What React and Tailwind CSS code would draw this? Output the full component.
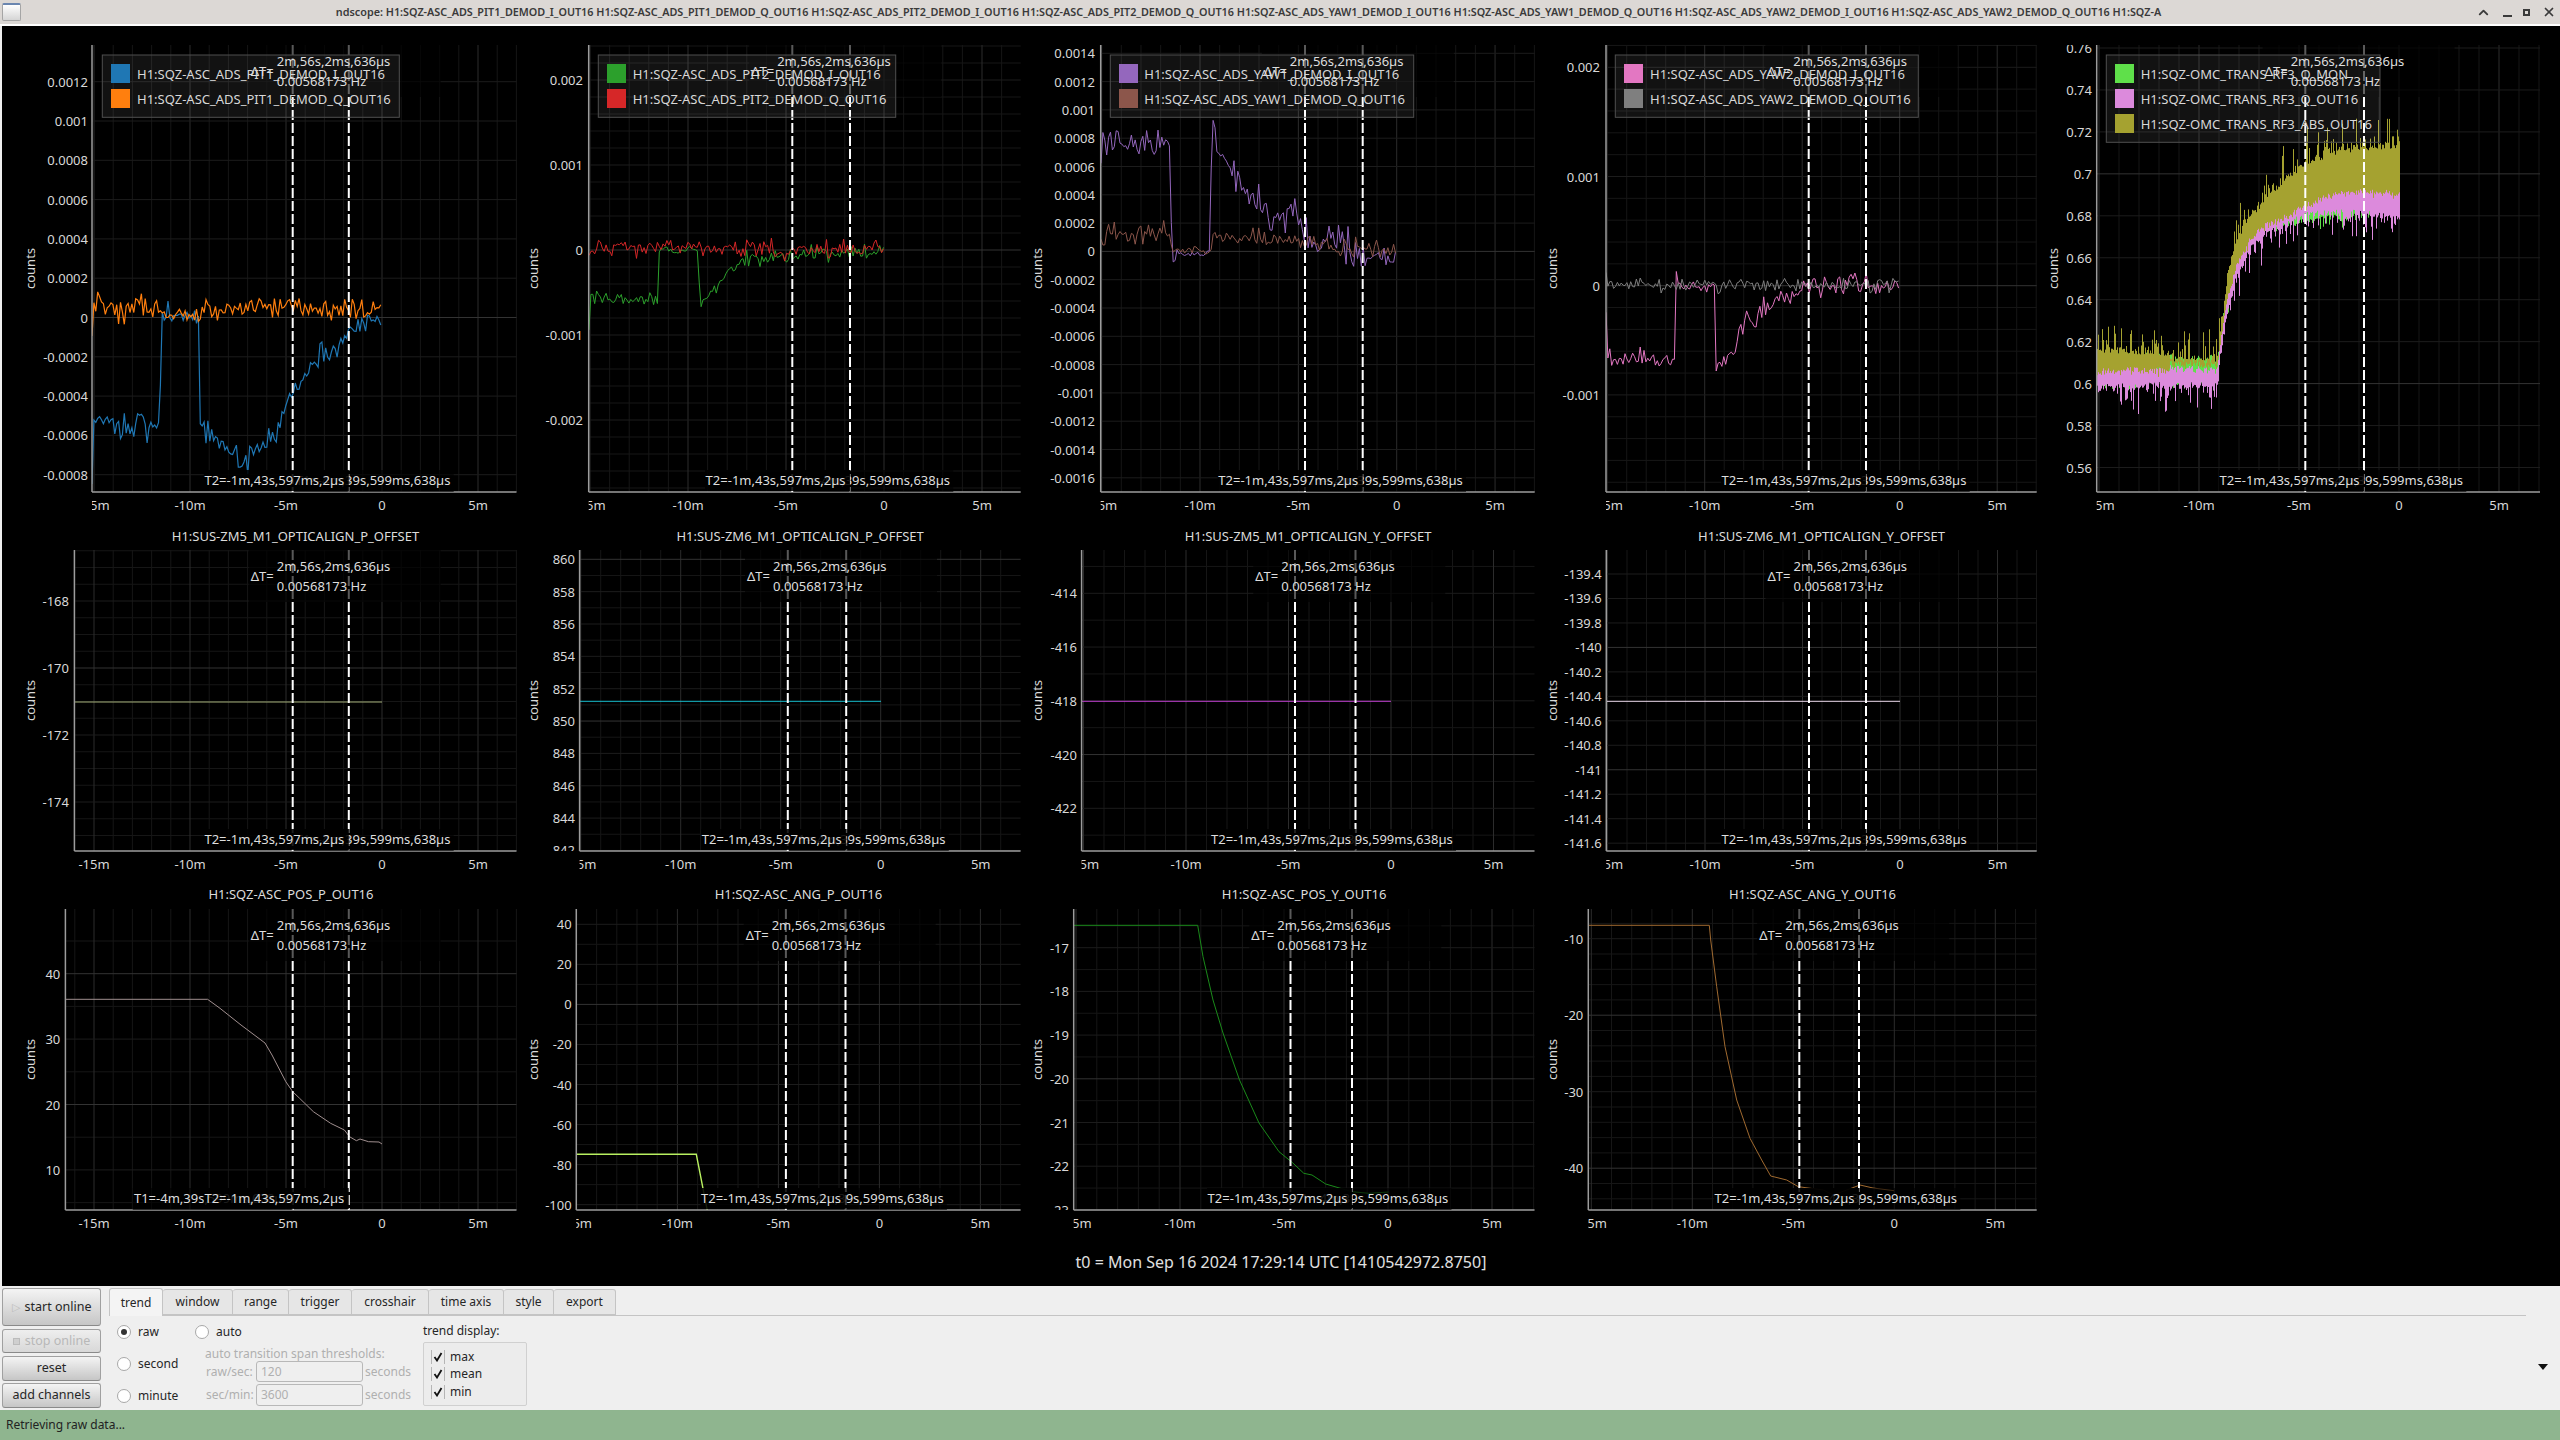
import { ChevronUp, X } from "lucide-react";

const FONT = "font-['Noto_Sans',sans-serif]";

const COLS = [
  [2, 518],
  [520, 510],
  [1030, 510],
  [1540, 505],
  [2045, 513],
];
const ROWS = [
  { y: 26, h: 494, top: 45, bottom: 492, titleY: null },
  { y: 520, h: 360, top: 550, bottom: 851, titleY: 541 },
  { y: 880, h: 360, top: 909, bottom: 1210, titleY: 899 },
];

function rng(seed) {
  let s = seed;
  return () => (s = (s * 16807) % 2147483647) / 2147483647;
}

function lerpAt(knots, x, i) {
  let k = 0;
  while (k < knots.length - 2 && x > knots[k + 1][0]) k++;
  const a = knots[k];
  const b = knots[k + 1];
  const t = Math.min(1, Math.max(0, (x - a[0]) / (b[0] - a[0] || 1)));
  return a[i] + (b[i] - a[i]) * t;
}

function noisy(seed, knots, step = 1.9) {
  const r = rng(seed);
  const start = knots[0][0];
  const end = knots[knots.length - 1][0];
  const pts = [];
  for (let x = start; x <= end; x += step) {
    const amp = lerpAt(knots, x, 2);
    const n = ((r() + r() + r() - 1.5) / 1.5) * 2 * amp;
    pts.push(`${x.toFixed(1)},${(lerpAt(knots, x, 1) + n).toFixed(1)}`);
  }
  return pts.join(" ");
}

function band(seed, topK, botK, topSpike, botSpike) {
  const r = rng(seed);
  let d = "";
  for (let x = 2097; x <= 2399; x += 1) {
    const t = lerpAt(topK, x, 1) - r() * 6 - Math.pow(r(), 5) * topSpike;
    const b = lerpAt(botK, x, 1) + r() * 6 + Math.pow(r(), 5) * botSpike;
    d += `M${x + 0.5} ${t.toFixed(1)}V${b.toFixed(1)}`;
  }
  return d;
}

const pl = (arr) => arr.map((p) => p.join(",")).join(" ");

const OLIVE_TOP = [[2097, 355], [2168, 356], [2170, 364], [2217, 364], [2220, 352], [2225, 296], [2235, 244], [2250, 219], [2265, 203], [2285, 182], [2305, 166], [2340, 154], [2399, 148]];
const OLIVE_BOT = [[2097, 367], [2168, 367], [2170, 361], [2217, 361], [2220, 340], [2225, 305], [2235, 265], [2250, 236], [2265, 222], [2285, 214], [2305, 202], [2340, 188], [2399, 190]];
const PINK_TOP = [[2097, 360], [2168, 372], [2217, 374], [2220, 340], [2225, 305], [2235, 265], [2250, 236], [2265, 222], [2285, 214], [2305, 202], [2340, 188], [2399, 190]];
const PINK_BOT = [[2097, 384], [2168, 382], [2217, 382], [2220, 352], [2225, 320], [2235, 276], [2250, 246], [2265, 230], [2285, 222], [2305, 212], [2340, 208], [2399, 214]];
const GREEN_TOP = [[2097, 360], [2168, 362], [2217, 362], [2220, 340], [2225, 305], [2235, 265], [2250, 236], [2265, 222], [2399, 190]];
const GREEN_BOT = [[2097, 378], [2168, 376], [2217, 376], [2220, 346], [2225, 314], [2235, 270], [2250, 240], [2265, 224], [2399, 205]];

const PLOTS = [
  {
    col: 0, row: 0, ax: 92, right: 516.5, x0: 382, slope: 19.2, c1: 292.7, c2: 348.8, labelR: 88, countsX: 30,
    y0: 81.7, step: 39.3, ticks: ["0.0012", "0.001", "0.0008", "0.0006", "0.0004", "0.0002", "0", "-0.0002", "-0.0004", "-0.0006", "-0.0008"], strong: ["0"], div: 1,
    legend: { x: 102.3, w: 297, sw: 111, tx: 137, items: [["#1f77b4", "H1:SQZ-ASC_ADS_PIT1_DEMOD_I_OUT16"], ["#ff7f0e", "H1:SQZ-ASC_ADS_PIT1_DEMOD_Q_OUT16"]] },
    traces: [
      { color: "#1f77b4", w: 1.2, pts: noisy(11, [[92, 486, 2], [93, 423, 12], [160, 423, 12], [161, 316, 8], [199, 317, 7], [200, 423, 8], [215, 436, 11], [232, 452, 10], [245, 460, 11], [262, 447, 10], [275, 437, 8], [283, 410, 6], [291, 393, 6], [300, 385, 6], [310, 370, 7], [320, 355, 7], [335, 350, 7], [345, 335, 7], [360, 324, 7], [382, 318, 6]]) },
      { color: "#ff7f0e", w: 1.2, pts: noisy(29, [[92, 335, 3], [93, 308, 10], [160, 308, 10], [165, 316, 6], [199, 316, 6], [205, 308, 8], [382, 310, 9]]) },
    ],
  },
  {
    col: 1, row: 0, ax: 588.7, right: 1020.7, x0: 884, slope: 19.6, c1: 792.3, c2: 850, labelR: 583, countsX: 533,
    y0: 80, step: 85, ticks: ["0.002", "0.001", "0", "-0.001", "-0.002"], strong: ["0"], div: 5,
    legend: { x: 598.3, w: 297.4, sw: 607, tx: 632.7, items: [["#2ca02c", "H1:SQZ-ASC_ADS_PIT2_DEMOD_I_OUT16"], ["#d62728", "H1:SQZ-ASC_ADS_PIT2_DEMOD_Q_OUT16"]] },
    traces: [
      { color: "#2ca02c", pts: noisy(5, [[589, 330, 1], [590, 298, 6], [658, 300, 6], [659, 250, 3], [698, 250, 3], [700, 304, 6], [705, 303, 6], [715, 290, 5], [730, 270, 5], [745, 262, 6], [770, 257, 6], [800, 254, 6], [884, 252, 6]]) },
      { color: "#d62728", pts: noisy(17, [[589, 256, 1], [592, 248, 6], [884, 249, 7]]) },
    ],
  },
  {
    col: 2, row: 0, ax: 1100.7, right: 1534.7, x0: 1396.7, slope: 19.67, c1: 1305, c2: 1362.7, labelR: 1095, countsX: 1037,
    y0: 53.3, step: 28.3, ticks: ["0.0014", "0.0012", "0.001", "0.0008", "0.0006", "0.0004", "0.0002", "0", "-0.0002", "-0.0004", "-0.0006", "-0.0008", "-0.001", "-0.0012", "-0.0014", "-0.0016"], strong: ["0"], div: 1,
    legend: { x: 1110.3, w: 303.4, sw: 1119, tx: 1144.3, items: [["#9467bd", "H1:SQZ-ASC_ADS_YAW1_DEMOD_I_OUT16"], ["#8c564b", "H1:SQZ-ASC_ADS_YAW1_DEMOD_Q_OUT16"]] },
    traces: [
      { color: "#9467bd", pts: noisy(23, [[1101, 175, 8], [1102, 143, 12], [1170, 143, 9], [1172, 266, 5], [1176, 254, 3], [1210, 252, 3], [1211.7, 130, 8], [1215, 135, 12], [1225, 150, 12], [1232, 172, 12], [1240, 188, 12], [1255, 200, 11], [1270, 212, 11], [1285, 222, 11], [1295, 212, 12], [1305, 233, 11], [1320, 242, 13], [1335, 238, 13], [1350, 252, 14], [1365, 256, 11], [1380, 255, 6], [1397, 258, 6]]) },
      { color: "#8c564b", pts: noisy(41, [[1101, 240, 5], [1102, 233, 8], [1170, 234, 8], [1173, 251, 4], [1210, 251, 3], [1213, 236, 6], [1300, 240, 7], [1340, 248, 7], [1397, 252, 7]]) },
    ],
  },
  {
    col: 3, row: 0, ax: 1606, right: 2036.7, x0: 1899.7, slope: 19.5, c1: 1808.7, c2: 1866, labelR: 1600, countsX: 1551.7,
    y0: 67.3, step: 109.2, ticks: ["0.002", "0.001", "0", "-0.001"], strong: ["0"], div: 5,
    legend: { x: 1615.3, w: 303, sw: 1624, tx: 1650, items: [["#e377c2", "H1:SQZ-ASC_ADS_YAW2_DEMOD_I_OUT16"], ["#7f7f7f", "H1:SQZ-ASC_ADS_YAW2_DEMOD_Q_OUT16"]] },
    traces: [
      { color: "#e377c2", pts: noisy(31, [[1606, 315, 2], [1608, 360, 9], [1675, 358, 7], [1676, 272, 3], [1679, 288, 5], [1715, 286, 5], [1716, 372, 4], [1725, 360, 8], [1735, 347, 9], [1740, 322, 7], [1750, 322, 9], [1760, 312, 7], [1770, 303, 6], [1785, 298, 6], [1800, 290, 7], [1830, 284, 8], [1900, 286, 8]]) },
      { color: "#7f7f7f", pts: noisy(37, [[1606, 272, 1], [1608, 285, 5], [1900, 285, 5]]) },
    ],
  },
  {
    col: 4, row: 0, ax: 2096.7, right: 2540, x0: 2399, slope: 20, c1: 2305.3, c2: 2364, labelR: 2092, countsX: 2052.7,
    y0: 48, step: 41.95, ticks: ["0.76", "0.74", "0.72", "0.7", "0.68", "0.66", "0.64", "0.62", "0.6", "0.58", "0.56"], strong: ["0.7", "0.6"], div: 1,
    legend: { x: 2106.3, w: 273.7, sw: 2115, tx: 2140.7, items: [["#5fe04a", "H1:SQZ-OMC_TRANS_RF3_Q_MON"], ["#dc8adc", "H1:SQZ-OMC_TRANS_RF3_Q_OUT16"], ["#a5a230", "H1:SQZ-OMC_TRANS_RF3_ABS_OUT16"]] },
    bands: [
      { color: "#5fe04a", d: band(3, GREEN_TOP, GREEN_BOT, 6, 10) },
      { color: "#dc8adc", d: band(7, PINK_TOP, PINK_BOT, 4, 26) },
      { color: "#a5a230", d: band(13, OLIVE_TOP, OLIVE_BOT, 34, 4) },
    ],
  },
  {
    col: 0, row: 1, ax: 74.4, right: 516.5, x0: 382, slope: 19.2, c1: 292.7, c2: 348.8, labelR: 69, countsX: 30,
    title: "H1:SUS-ZM5_M1_OPTICALIGN_P_OFFSET",
    y0: 601, step: 67, ticks: ["-168", "-170", "-172", "-174"], strong: ["-170"], div: 4,
    traces: [{ color: "#a3ae78", pts: "74,702 382,702" }],
  },
  {
    col: 1, row: 1, ax: 579.6, right: 1020.6, x0: 880.7, slope: 20, c1: 787.8, c2: 846.2, labelR: 575, countsX: 533,
    title: "H1:SUS-ZM6_M1_OPTICALIGN_P_OFFSET",
    y0: 559.3, step: 32.35, ticks: ["860", "858", "856", "854", "852", "850", "848", "846", "844", "842"], strong: ["860", "850"], div: 2,
    traces: [{ color: "#17becf", pts: "580,701.3 881,701.3" }],
  },
  {
    col: 2, row: 1, ax: 1081.6, right: 1534.5, x0: 1391, slope: 20.5, c1: 1295, c2: 1355.5, labelR: 1077, countsX: 1037,
    title: "H1:SUS-ZM5_M1_OPTICALIGN_Y_OFFSET",
    y0: 593.3, step: 53.75, ticks: ["-414", "-416", "-418", "-420", "-422"], strong: ["-420"], div: 2,
    traces: [{ color: "#c040d0", pts: "1082,701.3 1391,701.3" }],
  },
  {
    col: 3, row: 1, ax: 1606.3, right: 2036.7, x0: 1900, slope: 19.5, c1: 1809, c2: 1866, labelR: 1601.7, countsX: 1551.7,
    title: "H1:SUS-ZM6_M1_OPTICALIGN_Y_OFFSET",
    y0: 574, step: 24.47, ticks: ["-139.4", "-139.6", "-139.8", "-140", "-140.2", "-140.4", "-140.6", "-140.8", "-141", "-141.2", "-141.4", "-141.6"], strong: ["-140", "-141"], div: 1,
    traces: [{ color: "#efdcef", pts: "1606,701.3 1900,701.3" }],
  },
  null,
  {
    col: 0, row: 2, ax: 65.4, right: 516.5, x0: 382, slope: 19.2, c1: 292.7, c2: 348.8, labelR: 60.3, countsX: 30, t1Left: true,
    title: "H1:SQZ-ASC_POS_P_OUT16",
    y0: 973.7, step: 65.4, ticks: ["40", "30", "20", "10"], strong: ["40", "20"], div: 2,
    traces: [{ color: "#a08f8f", pts: pl([[65.4, 999.3], [207.6, 999.3], [220, 1008.3], [241, 1025], [265, 1043], [272, 1055], [285.8, 1081.7], [292.7, 1091.7], [299.6, 1098.3], [313.4, 1111.7], [330.6, 1123.3], [344.4, 1130], [349.5, 1136.7], [356.4, 1140.7], [360, 1139], [368.5, 1141.7], [379, 1142], [382, 1144]]) }],
  },
  {
    col: 1, row: 2, ax: 576.3, right: 1020.6, x0: 879.4, slope: 20.2, c1: 785.9, c2: 845.5, labelR: 571.7, countsX: 533,
    title: "H1:SQZ-ASC_ANG_P_OUT16",
    y0: 924.3, step: 40.05, ticks: ["40", "20", "0", "-20", "-40", "-60", "-80", "-100"], strong: ["0"], div: 2,
    traces: [{ color: "#b8f060", w: 1.4, pts: pl([[576.3, 1154.3], [696.3, 1154.3], [707.6, 1212]]) }],
  },
  {
    col: 2, row: 2, ax: 1073.7, right: 1534.5, x0: 1388, slope: 20.8, c1: 1290.5, c2: 1352, labelR: 1069, countsX: 1037,
    title: "H1:SQZ-ASC_POS_Y_OUT16",
    y0: 947.7, step: 43.7, ticks: ["-17", "-18", "-19", "-20", "-21", "-22", "-23"], strong: ["-20"], div: 2,
    traces: [{ color: "#1a8a1a", pts: pl([[1073.7, 925.3], [1197.7, 925.3], [1203, 956.7], [1213, 1000], [1223, 1033], [1239.5, 1080], [1259, 1123], [1279, 1151.7], [1292.5, 1162.7], [1303.8, 1173.3], [1312, 1175], [1325.7, 1184], [1352, 1191.7], [1368.7, 1193.3], [1388.7, 1192]]) }],
  },
  {
    col: 3, row: 2, ax: 1588.3, right: 2036.7, x0: 1894.3, slope: 20.2, c1: 1799.3, c2: 1859, labelR: 1583.3, countsX: 1551.7,
    title: "H1:SQZ-ASC_ANG_Y_OUT16",
    y0: 938.7, step: 76.5, ticks: ["-10", "-20", "-30", "-40"], strong: ["-20", "-40"], div: 5,
    traces: [{ color: "#a06a30", pts: pl([[1588.7, 925.3], [1709.3, 925.3], [1710.7, 940], [1716.7, 986.7], [1725, 1046.7], [1736.7, 1100], [1750, 1138.3], [1761.7, 1160], [1770.7, 1176], [1786.7, 1180], [1798.3, 1186.7], [1823.3, 1190], [1833.3, 1195], [1860, 1185], [1873, 1188], [1894, 1190.7]]) }],
  },
];

function Legend({ legend, top }) {
  const h = legend.items.length * 25 + 12.3;
  return (
    <g>
      <rect x={legend.x} y={top + 10} width={legend.w} height={h} fill="#ffffff" fillOpacity="0.07" stroke="#4f4f4f" />
      {legend.items.map(([color, name], i) => (
        <g key={name}>
          <rect x={legend.sw} y={top + 19 + i * 25} width="19" height="19" fill={color} />
          <text x={legend.tx} y={top + 34 + i * 25} className="fill-[#d8d8d8]">{name}</text>
        </g>
      ))}
    </g>
  );
}

function Plot({ plot }) {
  const { col, row, ax, right, x0, slope, c1, c2 } = plot;
  const [cx, cw] = COLS[col];
  const { y: cy, h: ch, top, bottom, titleY } = ROWS[row];
  const id = `p${col}${row}`;
  const mid = (c1 + c2) / 2;

  const vMinor = [];
  const vMajor = [];
  for (let m = -18; m <= 9; m++) {
    const x = x0 + m * slope;
    if (x <= ax || x >= right) continue;
    (m % 5 === 0 ? vMajor : vMinor).push(x);
  }
  const hMinor = [];
  if (plot.div > 1) {
    for (let k = -2 * plot.div; k < (plot.ticks.length + 2) * plot.div; k++) {
      const y = plot.y0 + (k * plot.step) / plot.div;
      if (k % plot.div !== 0 && y > top && y < bottom) hMinor.push(y);
    }
  }
  const tickY = (i) => plot.y0 + i * plot.step;
  const xTicks = [["-15m", -15], ["-10m", -10], ["-5m", -5], ["0", 0], ["5m", 5]];
  const t2Left = c2 - 145;

  return (
    <svg viewBox={`${cx} ${cy} ${cw} ${ch}`} className={`block w-full h-full text-[13px] ${FONT}`}>
      <defs>
        <clipPath id={`${id}-area`}>
          <rect x={ax} y={top} width={right - ax} height={bottom - top} />
        </clipPath>
        <clipPath id={`${id}-yl`}>
          <rect x={cx} y={top} width={ax - cx} height={bottom - top} />
        </clipPath>
        <clipPath id={`${id}-xl`}>
          <rect x={ax} y={bottom} width={cw} height={30} />
        </clipPath>
      </defs>

      {plot.title && (
        <text x={(ax + right) / 2} y={titleY} textAnchor="middle" className="fill-[#dcdcdc]">{plot.title}</text>
      )}

      {vMinor.map((x) => <line key={x} x1={x} x2={x} y1={top} y2={bottom} stroke="#161616" />)}
      {hMinor.map((y) => <line key={y} x1={ax} x2={right} y1={y} y2={y} stroke="#161616" />)}
      {vMajor.map((x) => <line key={x} x1={x} x2={x} y1={top} y2={bottom} stroke="#2c2c2c" />)}
      {plot.ticks.map((t, i) => (
        <line key={t} x1={ax} x2={right} y1={tickY(i)} y2={tickY(i)} stroke={plot.strong.includes(t) ? "#333333" : "#1c1c1c"} />
      ))}

      <g clipPath={`url(#${id}-area)`}>
        {plot.bands && plot.bands.map((b) => <path key={b.color} d={b.d} stroke={b.color} strokeWidth="1" fill="none" />)}
        {plot.traces && plot.traces.map((t) => (
          <polyline key={t.color} points={t.pts} fill="none" stroke={t.color} strokeWidth={t.w || 1} />
        ))}
      </g>

      <line x1={ax} x2={ax} y1={top} y2={bottom} stroke="#9c9c9c" strokeWidth="1.5" />
      <line x1={ax} x2={right} y1={bottom} y2={bottom} stroke="#9c9c9c" strokeWidth="1.5" />

      <g clipPath={`url(#${id}-yl)`}>
        {plot.ticks.map((t, i) => (
          <text key={t} x={plot.labelR} y={tickY(i) + 5} textAnchor="end" className="fill-[#d8d8d8]">{t}</text>
        ))}
      </g>
      <g clipPath={`url(#${id}-xl)`}>
        {xTicks.map(([t, m]) => (
          <text key={t} x={x0 + m * slope} y={bottom + 18} textAnchor="middle" className="fill-[#d8d8d8]">{t}</text>
        ))}
      </g>
      <text
        x={plot.countsX}
        y={(top + bottom) / 2}
        textAnchor="middle"
        transform={`rotate(-90 ${plot.countsX} ${(top + bottom) / 2})`}
        dominantBaseline="central"
        className="fill-[#d8d8d8]"
      >
        counts
      </text>

      <line x1={c1} x2={c1} y1={top} y2={bottom} stroke="#ffffff" strokeWidth="2" strokeDasharray="10 3" />
      <line x1={c2} x2={c2} y1={top} y2={bottom} stroke="#ffffff" strokeWidth="2" strokeDasharray="10 3" />
      <rect x={mid - 72} y={top - 1} width={192} height={53} fill="#000000" fillOpacity="0.65" />

      {plot.legend && <Legend legend={plot.legend} top={top} />}

      <text x={mid - 70} y={top + 31} className="fill-[#dedede]">ΔT=</text>
      <text x={mid - 44} y={top + 21} className="fill-[#dedede]">2m,56s,2ms,636µs</text>
      <text x={mid - 44} y={top + 41} className="fill-[#dedede]">0.00568173 Hz</text>

      {plot.t1Left ? (
        <g>
          <rect x={c1 - 160} y={bottom - 22} width={160} height={22} fill="#000000" fillOpacity="0.6" />
          <text x={c1 - 4} y={bottom - 7} textAnchor="end" className="fill-[#dedede]">T1=-4m,39s,599ms,638µs</text>
        </g>
      ) : (
        <g>
          <rect x={c1 + 1} y={bottom - 22} width={160} height={22} fill="#000000" fillOpacity="0.6" />
          <text x={c1 + 3} y={bottom - 7} className="fill-[#dedede]">T1=-4m,39s,599ms,638µs</text>
        </g>
      )}
      <rect x={t2Left} y={bottom - 22} width={145} height={21} fill="#000000" fillOpacity="0.88" />
      <text x={c2 - 4.5} y={bottom - 7} textAnchor="end" className="fill-[#dedede]">T2=-1m,43s,597ms,2µs</text>
    </svg>
  );
}

function Button({ children, h, disabled, icon }) {
  return (
    <button
      className={`flex items-center justify-center gap-[5px] rounded-[3px] border border-[#a0a0a0] border-b-[#8a8a8a] bg-gradient-to-b text-[12.5px] ${h} ${
        disabled ? "from-[#eeeeee] to-[#d8d8d8] text-[#b8b8b8]" : "from-[#f4f4f4] to-[#c6c6c6] text-[#262626]"
      }`}
    >
      {icon}
      {children}
    </button>
  );
}

function Radio({ label, checked, muted }) {
  return (
    <div className="flex items-center gap-[7px]">
      <span className="flex w-[14px] h-[14px] items-center justify-center rounded-full border border-[#a8a8a8] bg-white">
        {checked && <span className="w-[6px] h-[6px] rounded-full bg-[#333333]" />}
      </span>
      <span className={muted ? "text-[#b0b0b0]" : "text-[#262626]"}>{label}</span>
    </div>
  );
}

function Check({ label }) {
  return (
    <div className="flex h-[17.5px] items-center gap-[5px]">
      <span className="flex w-[14px] h-[14px] items-center justify-center border-x border-[#b5b5b5]">
        <svg width="10" height="10" viewBox="0 0 10 10">
          <path d="M1.5 5 L4 8.5 L8.5 1" fill="none" stroke="#111111" strokeWidth="1.8" />
        </svg>
      </span>
      <span>{label}</span>
    </div>
  );
}

const TABS = [
  ["trend", "w-[54px]"],
  ["window", "w-[70px]"],
  ["range", "w-[56px]"],
  ["trigger", "w-[63px]"],
  ["crosshair", "w-[77px]"],
  ["time axis", "w-[75px]"],
  ["style", "w-[50px]"],
  ["export", "w-[62px]"],
];

export default function App() {
  const title =
    "ndscope: H1:SQZ-ASC_ADS_PIT1_DEMOD_I_OUT16 H1:SQZ-ASC_ADS_PIT1_DEMOD_Q_OUT16 H1:SQZ-ASC_ADS_PIT2_DEMOD_I_OUT16 H1:SQZ-ASC_ADS_PIT2_DEMOD_Q_OUT16 H1:SQZ-ASC_ADS_YAW1_DEMOD_I_OUT16 H1:SQZ-ASC_ADS_YAW1_DEMOD_Q_OUT16 H1:SQZ-ASC_ADS_YAW2_DEMOD_I_OUT16 H1:SQZ-ASC_ADS_YAW2_DEMOD_Q_OUT16 H1:SQZ-A";

  return (
    <div className={`flex flex-col w-[2560px] h-[1440px] overflow-hidden bg-[#efefef] text-[12px] ${FONT}`}>
      {/* window title bar */}
      <div className="flex h-[24px] shrink-0 items-center bg-[#dcd8d5] px-[2px]">
        <div className="w-[19px] h-[18px] shrink-0 rounded-[2px] border border-[#a5a5a5] border-t-2 border-t-[#6a86b0] bg-gradient-to-b from-white to-[#d5d5d5]" />
        <div className="flex-1 text-center text-[10.8px] font-semibold text-[#3a3a3a] whitespace-nowrap">{title}</div>
        <div className="flex w-[82px] items-center justify-between pr-[2px] text-[#3a3a3a]">
          <ChevronUp size={15} strokeWidth={3} />
          <span className="mt-[8px] w-[9px] h-[2px] bg-[#3a3a3a]" />
          <span className="w-[7px] h-[7px] border-2 border-[#3a3a3a]" />
          <X size={14} strokeWidth={3} />
        </div>
      </div>
      <div className="h-[2px] shrink-0 bg-white" />

      {/* plots */}
      <div className="ml-[2px] bg-black">
        <div className="grid grid-cols-[518px_510px_510px_505px_513px] grid-rows-[494px_360px_360px]">
          {PLOTS.map((p, i) => (
            <div key={i}>{p && <Plot plot={p} />}</div>
          ))}
        </div>
        <div className="flex h-[46px] items-center justify-center pb-[2px] text-[16px] text-[#e0e0e0]">
          t0 = Mon Sep 16 2024 17:29:14 UTC [1410542972.8750]
        </div>
      </div>

      {/* control panel */}
      <div className="flex h-[124px] shrink-0 pl-[2px] pt-[2px] text-[#262626]">
        <div className="flex w-[99px] flex-col">
          <Button h="h-[38px]" icon={<span className="text-[#bdbdbd] text-[11px]">▷</span>}>start online</Button>
          <div className="h-[3px]" />
          <Button h="h-[24px]" disabled icon={<span className="w-[7px] h-[7px] bg-[#cfcfcf] border border-[#bbbbbb]" />}>stop online</Button>
          <div className="h-[3px]" />
          <Button h="h-[25px]">reset</Button>
          <div className="h-[2px]" />
          <Button h="h-[25px]">add channels</Button>
        </div>

        <div className="ml-[8px] w-[2417px]">
          <div className="flex h-[28px] items-end border-b border-[#c4c4c4]">
            {TABS.map(([t, w], i) => (
              <div
                key={t}
                className={`flex items-center justify-center rounded-t-[3px] border border-[#c4c4c4] ${w} ${
                  i === 0 ? "h-[28px] -mb-[1px] border-b-0 bg-[#f4f4f4]" : "h-[26px] border-l-0 bg-[#e6e6e6]"
                }`}
              >
                {t}
              </div>
            ))}
          </div>

          <div className="flex">
            <div className="ml-[8px] flex w-[78px] flex-col">
              <div className="flex h-[32px] items-center"><Radio label="raw" checked /></div>
              <div className="flex h-[32px] items-center"><Radio label="second" /></div>
              <div className="flex h-[32px] items-center"><Radio label="minute" /></div>
            </div>

            <div className="flex w-[228px] flex-col text-[#b0b0b0]">
              <div className="flex h-[32px] items-center"><Radio label="auto" /></div>
              <div className="flex h-[12px] items-center pl-[10px] whitespace-nowrap">auto transition span thresholds:</div>
              <div className="mt-[1px] flex h-[21px] items-center pl-[11px]">
                <span className="w-[50px]">raw/sec:</span>
                <span className="flex h-full w-[107px] items-center rounded-[3px] border border-[#b8b8b8] pl-[4px]">120</span>
                <span className="ml-[2px]">seconds</span>
              </div>
              <div className="mt-[2px] flex h-[22px] items-center pl-[11px]">
                <span className="w-[50px]">sec/min:</span>
                <span className="flex h-full w-[107px] items-center rounded-[3px] border border-[#b8b8b8] pl-[4px]">3600</span>
                <span className="ml-[2px]">seconds</span>
              </div>
            </div>

            <div className="flex w-[104px] flex-col">
              <div className="flex h-[26px] items-center pt-[4px]">trend display:</div>
              <div className="flex h-[64px] flex-col justify-center rounded-[2px] border border-[#d0d0d0] bg-[#ececec] pl-[7px]">
                <Check label="max" />
                <Check label="mean" />
                <Check label="min" />
              </div>
            </div>

            <div className="ml-auto mr-[-22px] mt-[48px] w-0 h-0 border-x-[5px] border-t-[6px] border-x-transparent border-t-[#111111]" />
          </div>
        </div>
      </div>

      {/* status bar */}
      <div className="flex h-[30px] shrink-0 items-center bg-[#8fb58f] pl-[6px] text-[#222222]">
        Retrieving raw data...
      </div>
    </div>
  );
}
